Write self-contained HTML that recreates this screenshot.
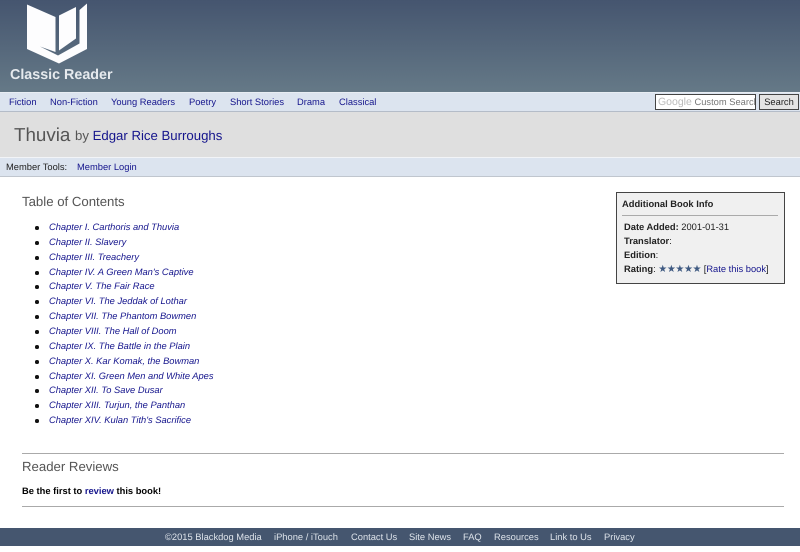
<!DOCTYPE html>
<html><head><meta charset="utf-8"><title>Thuvia</title>
<style>
html,body{margin:0;padding:0;background:#fff;}
body{width:800px;height:552px;position:relative;overflow:hidden;font-family:"Liberation Sans",sans-serif;font-size:9.35px;color:#000;text-rendering:geometricPrecision;}
a{text-decoration:none;color:#14148c;}
.abs{position:absolute;white-space:nowrap;}
#hdr{position:absolute;left:0;top:0;width:800px;height:92px;background:linear-gradient(#45556f,#657987);}
#nav{position:absolute;left:0;top:92px;width:800px;height:20px;background:#dce4ef;border-bottom:1px solid #b4bcc8;border-top:1px solid #e8edf3;box-sizing:border-box;}
#band{position:absolute;left:0;top:112px;width:800px;height:45px;background:#dfdfdf;}
#tools{position:absolute;left:0;top:157px;width:800px;height:20px;background:#dce4ef;border-top:1px solid #f2f4f7;border-bottom:1px solid #c0c6ce;box-sizing:border-box;}
.n{top:97px;line-height:11px;font-size:9.35px;}
.ch{left:49px;font-style:italic;line-height:11px;font-size:9.33px;}
.dot{position:absolute;left:35px;width:3.6px;height:3.6px;border-radius:50%;background:#111;}
h2{position:absolute;margin:0;font-weight:normal;font-size:13.2px;line-height:16px;color:#555;white-space:nowrap;}
.f{top:532px;line-height:11px;font-size:9.35px;color:#dde3ea;}
.i{left:624px;line-height:11px;font-size:9.35px;color:#222;}
</style></head><body>
<div id="hdr"></div>
<svg class="abs" style="left:0;top:0" width="100" height="70" viewBox="0 0 100 70">
<polygon fill="#fdfdfe" points="27,4.5 55.5,17 55.5,52 40,46.5 58,55.5 79.5,43.5 79.5,10 87,3.5 87,49 59,63.5 27,49"/>
<polygon fill="#fdfdfe" points="59,15.5 76,7 76,38.5 59,50.5"/>
</svg>
<div class="abs" style="left:10px;top:67px;font-size:14.3px;line-height:16px;font-weight:bold;color:#e6eaee;">Classic Reader</div>

<div id="nav"></div>
<a class="abs n" style="left:9px">Fiction</a>
<a class="abs n" style="left:50px">Non-Fiction</a>
<a class="abs n" style="left:111px">Young Readers</a>
<a class="abs n" style="left:189px">Poetry</a>
<a class="abs n" style="left:230px">Short Stories</a>
<a class="abs n" style="left:297px">Drama</a>
<a class="abs n" style="left:339px">Classical</a>
<div class="abs" style="left:655px;top:94px;width:101px;height:16px;box-sizing:border-box;border:1px solid #444;background:#fff;overflow:hidden;line-height:14px;font-size:9.35px;padding-left:2px;color:#777;"><span style="color:#bbb;font-size:10.5px;">Google</span> Custom Search</div>
<div class="abs" style="left:759px;top:94px;width:40px;height:16px;box-sizing:border-box;border:1px solid #444;background:#e4e4e4;text-align:center;line-height:15px;font-size:9.35px;color:#222;">Search</div>

<div id="band"></div>
<div class="abs" style="left:14px;top:123px;font-size:18.8px;line-height:23px;color:#555;">Thuvia</div>
<div class="abs" style="left:75px;top:128px;font-size:13.2px;line-height:16px;color:#555;">by <a>Edgar Rice Burroughs</a></div>

<div id="tools"></div>
<div class="abs" style="left:6px;top:162px;line-height:11px;color:#222;">Member Tools:</div>
<a class="abs" style="left:77px;top:162px;line-height:11px;">Member Login</a>

<h2 style="left:22px;top:194px;">Table of Contents</h2>

<i class="dot" style="top:226px"></i><a class="abs ch" style="top:222px">Chapter I. Carthoris and Thuvia</a>
<i class="dot" style="top:241px"></i><a class="abs ch" style="top:237px">Chapter II. Slavery</a>
<i class="dot" style="top:256px"></i><a class="abs ch" style="top:252px">Chapter III. Treachery</a>
<i class="dot" style="top:271px"></i><a class="abs ch" style="top:267px">Chapter IV. A Green Man's Captive</a>
<i class="dot" style="top:285px"></i><a class="abs ch" style="top:281px">Chapter V. The Fair Race</a>
<i class="dot" style="top:300px"></i><a class="abs ch" style="top:296px">Chapter VI. The Jeddak of Lothar</a>
<i class="dot" style="top:315px"></i><a class="abs ch" style="top:311px">Chapter VII. The Phantom Bowmen</a>
<i class="dot" style="top:330px"></i><a class="abs ch" style="top:326px">Chapter VIII. The Hall of Doom</a>
<i class="dot" style="top:345px"></i><a class="abs ch" style="top:341px">Chapter IX. The Battle in the Plain</a>
<i class="dot" style="top:360px"></i><a class="abs ch" style="top:356px">Chapter X. Kar Komak, the Bowman</a>
<i class="dot" style="top:375px"></i><a class="abs ch" style="top:371px">Chapter XI. Green Men and White Apes</a>
<i class="dot" style="top:389px"></i><a class="abs ch" style="top:385px">Chapter XII. To Save Dusar</a>
<i class="dot" style="top:404px"></i><a class="abs ch" style="top:400px">Chapter XIII. Turjun, the Panthan</a>
<i class="dot" style="top:419px"></i><a class="abs ch" style="top:415px">Chapter XIV. Kulan Tith's Sacrifice</a>

<div class="abs" style="left:616px;top:192px;width:169px;height:92px;box-sizing:border-box;border:1px solid #444;background:#f0f0f0;"></div>
<div class="abs" style="left:622px;top:199px;line-height:11px;font-weight:bold;color:#222;">Additional Book Info</div>
<div class="abs" style="left:622px;top:215px;width:156px;height:1px;background:#aaa;"></div>
<div class="abs i" style="top:222px"><b>Date Added:</b> 2001-01-31</div>
<div class="abs i" style="top:236px"><b>Translator</b>:</div>
<div class="abs i" style="top:250px"><b>Edition</b>:</div>
<div class="abs i" style="top:264px"><b>Rating</b>: <span style="color:#3f5a82;font-size:10px;letter-spacing:-.4px;">★★★★★</span> [<a>Rate this book</a>]</div>

<div class="abs" style="left:22px;top:453px;width:762px;height:1px;background:#aaa;"></div>
<h2 style="left:22px;top:459px;">Reader Reviews</h2>
<div class="abs" style="left:22px;top:486px;line-height:11px;font-weight:bold;">Be the first to <a>review</a> this book!</div>
<div class="abs" style="left:22px;top:506px;width:762px;height:1px;background:#aaa;"></div>

<div class="abs" style="left:0;top:528px;width:800px;height:18px;background:#45566f;"></div>
<span class="abs f" style="left:165px">©2015 Blackdog Media</span>
<span class="abs f" style="left:274px">iPhone / iTouch</span>
<span class="abs f" style="left:351px">Contact Us</span>
<span class="abs f" style="left:409px">Site News</span>
<span class="abs f" style="left:463px">FAQ</span>
<span class="abs f" style="left:494px">Resources</span>
<span class="abs f" style="left:550px">Link to Us</span>
<span class="abs f" style="left:604px">Privacy</span>
</body></html>
